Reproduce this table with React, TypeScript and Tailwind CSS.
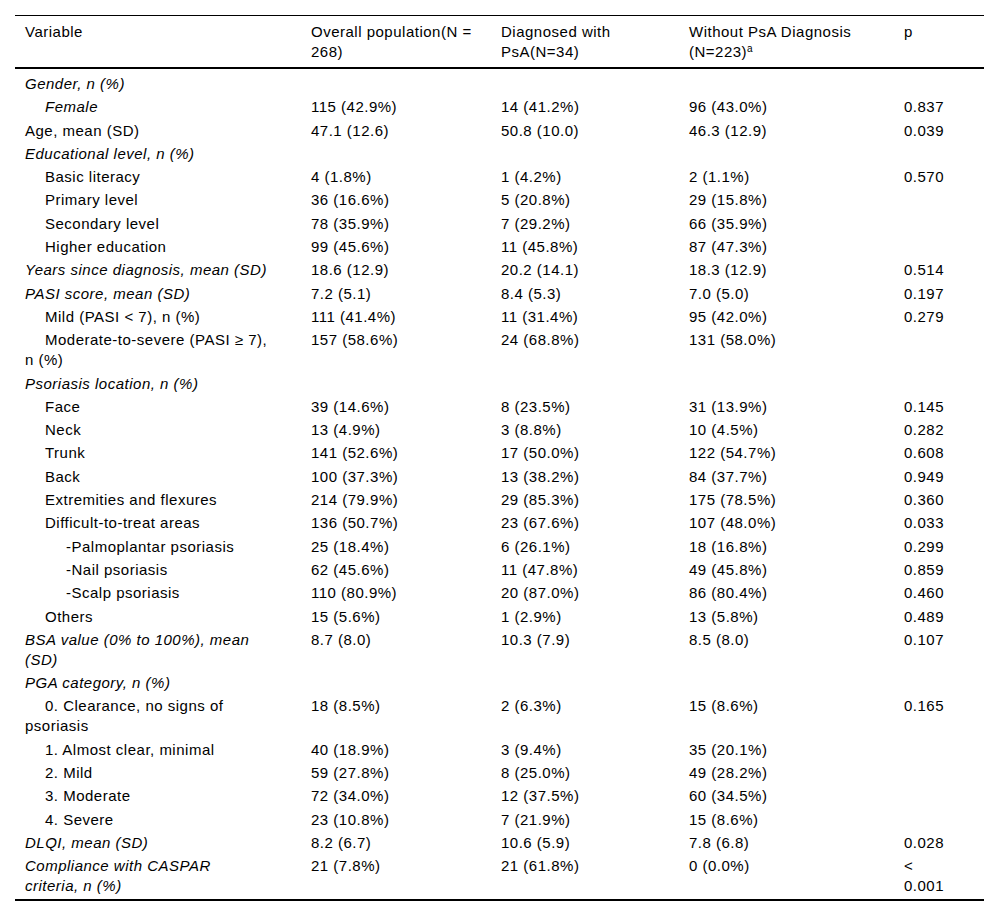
import React from "react";

type Row = {
  label: React.ReactNode;
  level?: 0 | 1 | 2;
  italic?: boolean;
  cells?: [string, string, string, React.ReactNode];
};

const rows: Row[] = [
  { label: "Gender, n (%)", italic: true },
  { label: "Female", level: 1, italic: true, cells: ["115 (42.9%)", "14 (41.2%)", "96 (43.0%)", "0.837"] },
  { label: "Age, mean (SD)", cells: ["47.1 (12.6)", "50.8 (10.0)", "46.3 (12.9)", "0.039"] },
  { label: "Educational level, n (%)", italic: true },
  { label: "Basic literacy", level: 1, cells: ["4 (1.8%)", "1 (4.2%)", "2 (1.1%)", "0.570"] },
  { label: "Primary level", level: 1, cells: ["36 (16.6%)", "5 (20.8%)", "29 (15.8%)", ""] },
  { label: "Secondary level", level: 1, cells: ["78 (35.9%)", "7 (29.2%)", "66 (35.9%)", ""] },
  { label: "Higher education", level: 1, cells: ["99 (45.6%)", "11 (45.8%)", "87 (47.3%)", ""] },
  { label: "Years since diagnosis, mean (SD)", italic: true, cells: ["18.6 (12.9)", "20.2 (14.1)", "18.3 (12.9)", "0.514"] },
  { label: "PASI score, mean (SD)", italic: true, cells: ["7.2 (5.1)", "8.4 (5.3)", "7.0 (5.0)", "0.197"] },
  { label: "Mild (PASI < 7), n (%)", level: 1, cells: ["111 (41.4%)", "11 (31.4%)", "95 (42.0%)", "0.279"] },
  {
    label: (
      <>
        <span className="pl-[20px]">Moderate-to-severe (PASI ≥ 7),</span>
        <br />n (%)
      </>
    ),
    cells: ["157 (58.6%)", "24 (68.8%)", "131 (58.0%)", ""],
  },
  { label: "Psoriasis location, n (%)", italic: true },
  { label: "Face", level: 1, cells: ["39 (14.6%)", "8 (23.5%)", "31 (13.9%)", "0.145"] },
  { label: "Neck", level: 1, cells: ["13 (4.9%)", "3 (8.8%)", "10 (4.5%)", "0.282"] },
  { label: "Trunk", level: 1, cells: ["141 (52.6%)", "17 (50.0%)", "122 (54.7%)", "0.608"] },
  { label: "Back", level: 1, cells: ["100 (37.3%)", "13 (38.2%)", "84 (37.7%)", "0.949"] },
  { label: "Extremities and flexures", level: 1, cells: ["214 (79.9%)", "29 (85.3%)", "175 (78.5%)", "0.360"] },
  { label: "Difficult-to-treat areas", level: 1, cells: ["136 (50.7%)", "23 (67.6%)", "107 (48.0%)", "0.033"] },
  { label: "-Palmoplantar psoriasis", level: 2, cells: ["25 (18.4%)", "6 (26.1%)", "18 (16.8%)", "0.299"] },
  { label: "-Nail psoriasis", level: 2, cells: ["62 (45.6%)", "11 (47.8%)", "49 (45.8%)", "0.859"] },
  { label: "-Scalp psoriasis", level: 2, cells: ["110 (80.9%)", "20 (87.0%)", "86 (80.4%)", "0.460"] },
  { label: "Others", level: 1, cells: ["15 (5.6%)", "1 (2.9%)", "13 (5.8%)", "0.489"] },
  {
    label: (
      <>
        BSA value (0% to 100%), mean
        <br />
        (SD)
      </>
    ),
    italic: true,
    cells: ["8.7 (8.0)", "10.3 (7.9)", "8.5 (8.0)", "0.107"],
  },
  { label: "PGA category, n (%)", italic: true },
  {
    label: (
      <>
        <span className="pl-[20px]">0. Clearance, no signs of</span>
        <br />
        psoriasis
      </>
    ),
    cells: ["18 (8.5%)", "2 (6.3%)", "15 (8.6%)", "0.165"],
  },
  { label: "1. Almost clear, minimal", level: 1, cells: ["40 (18.9%)", "3 (9.4%)", "35 (20.1%)", ""] },
  { label: "2. Mild", level: 1, cells: ["59 (27.8%)", "8 (25.0%)", "49 (28.2%)", ""] },
  { label: "3. Moderate", level: 1, cells: ["72 (34.0%)", "12 (37.5%)", "60 (34.5%)", ""] },
  { label: "4. Severe", level: 1, cells: ["23 (10.8%)", "7 (21.9%)", "15 (8.6%)", ""] },
  { label: "DLQI, mean (SD)", italic: true, cells: ["8.2 (6.7)", "10.6 (5.9)", "7.8 (6.8)", "0.028"] },
  {
    label: (
      <>
        Compliance with CASPAR
        <br />
        criteria, n (%)
      </>
    ),
    italic: true,
    cells: [
      "21 (7.8%)",
      "21 (61.8%)",
      "0 (0.0%)",
      <>
        &lt;
        <br />
        0.001
      </>,
    ],
  },
];

const indent = ["pl-[10px]", "pl-[30px]", "pl-[51px]"];

export default function App() {
  return (
    <div className="min-h-[919px] bg-white pt-[15px] pl-[15px] font-['Liberation_Sans',Arial,sans-serif] text-[15px] leading-[20px] tracking-[0.5px] text-black">
      <table className="w-[969px] table-fixed border-collapse border-t border-b-2 border-black">
        <colgroup>
          <col className="w-[286px]" />
          <col className="w-[190px]" />
          <col className="w-[188px]" />
          <col className="w-[215px]" />
          <col className="w-[90px]" />
        </colgroup>
        <thead>
          <tr className="border-b-2 border-black align-top">
            <th className="pl-[10px] pt-[6px] pb-[5px] text-left font-normal">Variable</th>
            <th className="pl-[10px] pt-[6px] pb-[5px] text-left font-normal">
              Overall population(N =
              <br />
              268)
            </th>
            <th className="pl-[10px] pt-[6px] pb-[5px] text-left font-normal">
              Diagnosed with
              <br />
              PsA(N=34)
            </th>
            <th className="pl-[10px] pt-[6px] pb-[5px] text-left font-normal">
              Without PsA Diagnosis
              <br />
              (N=223)<sup className="text-[10px]">a</sup>
            </th>
            <th className="pl-[10px] pt-[6px] pb-[5px] text-left font-normal">p</th>
          </tr>
        </thead>
        <tbody>
          {rows.map((r, i) => {
            const pad =
              i === 0
                ? "pt-[5px] pb-[2.3px]"
                : i === rows.length - 1
                  ? "pt-[1px] pb-[3px]"
                  : "pt-[1px] pb-[2.3px]";
            return (
              <tr key={i} className="align-top">
                <td className={`${indent[r.level ?? 0]} ${pad} ${r.italic ? "italic" : ""}`}>{r.label}</td>
                {(r.cells ?? ["", "", "", ""]).map((c, j) => (
                  <td key={j} className={`pl-[10px] ${pad}`}>
                    {c}
                  </td>
                ))}
              </tr>
            );
          })}
        </tbody>
      </table>
    </div>
  );
}
